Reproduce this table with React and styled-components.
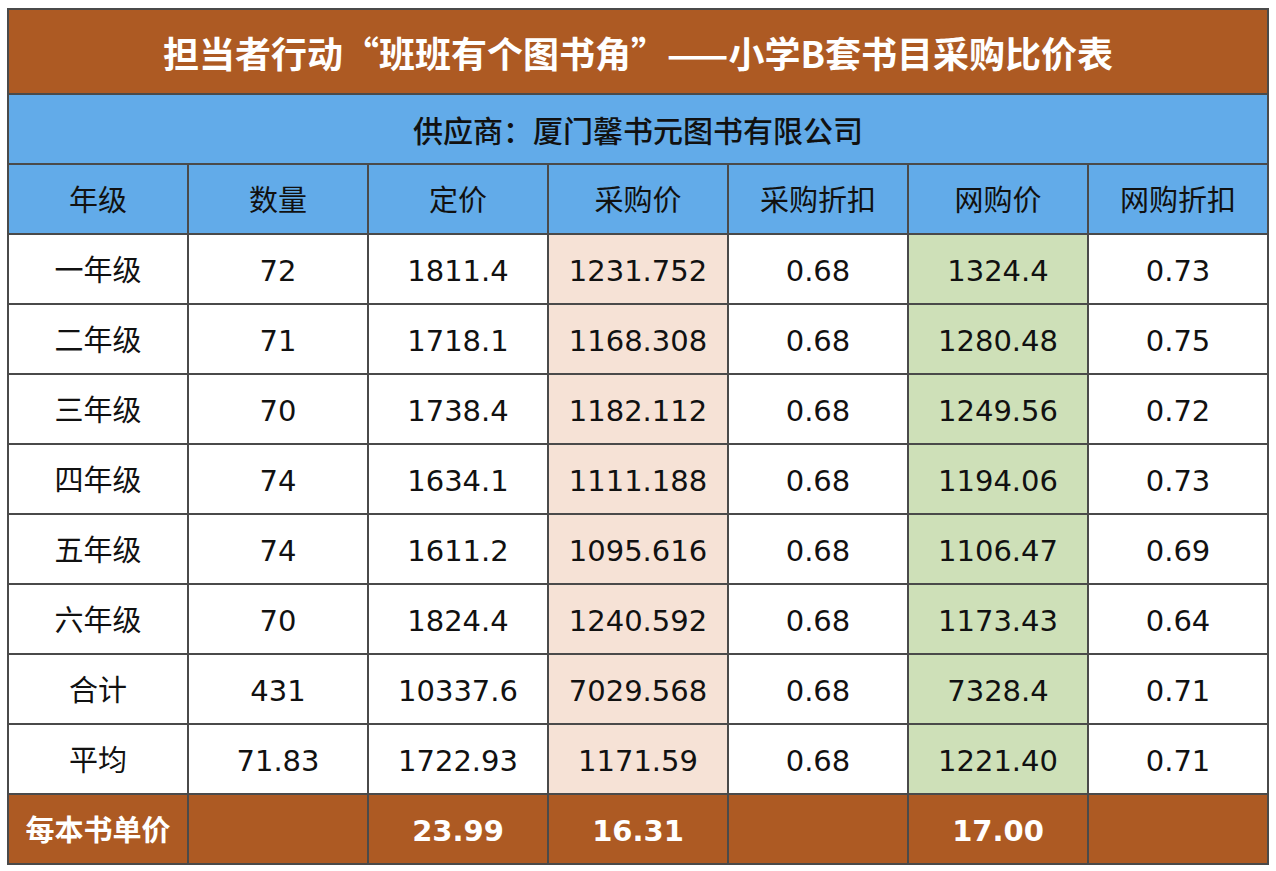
import React from 'react'
import { createGlobalStyle, styled } from 'styled-components'

const GlobalStyle = createGlobalStyle`
  html, body {
    margin: 0;
    padding: 0;
    background: #ffffff;
  }
  body {
    font-family: 'DejaVu Sans', 'Noto Sans CJK SC', sans-serif;
    color: #111;
  }
`

const Page = styled.div`
  padding: 8px 0 0 7px;
`

const Table = styled.table`
  border-collapse: collapse;
  table-layout: fixed;
  width: 1261px;
  border: 2px solid #4a4a4a;
`

const Cell = styled.td`
  border: 2px solid #4a4a4a;
  height: 64px;
  padding: 4px 0 0;
  text-align: center;
  vertical-align: middle;
  font-size: 29px;
  line-height: 1;
  background: ${(p) => p.$bg || '#ffffff'};
  color: ${(p) => p.$color || '#111'};
  font-weight: ${(p) => (p.$bold ? 700 : 400)};
  white-space: nowrap;
`

const TitleCell = styled(Cell)`
  height: 83px;
  padding: 0;
  font-family: 'Noto Sans CJK SC', 'DejaVu Sans', sans-serif;
  font-size: 36px;
  font-weight: 700;
  color: #ffffff;
  background: #ad5a23;
`

const SubTitleCell = styled(Cell)`
  height: 68px;
  padding: 0;
  font-family: 'Noto Sans CJK SC', 'DejaVu Sans', sans-serif;
  font-size: 30px;
  font-weight: 500;
  background: #62abe9;
`

const BROWN = '#ad5a23'
const BLUE = '#62abe9'
const PEACH = '#f6e2d6'
const GREEN = '#cee0b8'

const headers = ['年级', '数量', '定价', '采购价', '采购折扣', '网购价', '网购折扣']

const rows = [
  ['一年级', '72', '1811.4', '1231.752', '0.68', '1324.4', '0.73'],
  ['二年级', '71', '1718.1', '1168.308', '0.68', '1280.48', '0.75'],
  ['三年级', '70', '1738.4', '1182.112', '0.68', '1249.56', '0.72'],
  ['四年级', '74', '1634.1', '1111.188', '0.68', '1194.06', '0.73'],
  ['五年级', '74', '1611.2', '1095.616', '0.68', '1106.47', '0.69'],
  ['六年级', '70', '1824.4', '1240.592', '0.68', '1173.43', '0.64'],
  ['合计', '431', '10337.6', '7029.568', '0.68', '7328.4', '0.71'],
  ['平均', '71.83', '1722.93', '1171.59', '0.68', '1221.40', '0.71']
]

const unitRow = ['每本书单价', '', '23.99', '16.31', '', '17.00', '']

// 采购价 and 网购价 columns are tinted
const colBg = (i) => (i === 3 ? PEACH : i === 5 ? GREEN : '#ffffff')

const App = () => {
  return (
    <Page>
      <GlobalStyle />
      <Table>
        <colgroup>
          {headers.map((h) => (
            <col key={h} style={{ width: 180 }} />
          ))}
        </colgroup>
        <tbody>
          <tr>
            <TitleCell colSpan={7}>
              担当者行动“班班有个图书角”——小学B套书目采购比价表
            </TitleCell>
          </tr>
          <tr>
            <SubTitleCell colSpan={7}>供应商：厦门馨书元图书有限公司</SubTitleCell>
          </tr>
          <tr>
            {headers.map((h) => (
              <Cell key={h} $bg={BLUE}>
                {h}
              </Cell>
            ))}
          </tr>
          {rows.map((row) => (
            <tr key={row[0]}>
              {row.map((v, i) => (
                <Cell key={i} $bg={colBg(i)}>
                  {v}
                </Cell>
              ))}
            </tr>
          ))}
          <tr>
            {unitRow.map((v, i) => (
              <Cell key={i} $bg={BROWN} $color='#ffffff' $bold>
                {v}
              </Cell>
            ))}
          </tr>
        </tbody>
      </Table>
    </Page>
  )
}

export default App
